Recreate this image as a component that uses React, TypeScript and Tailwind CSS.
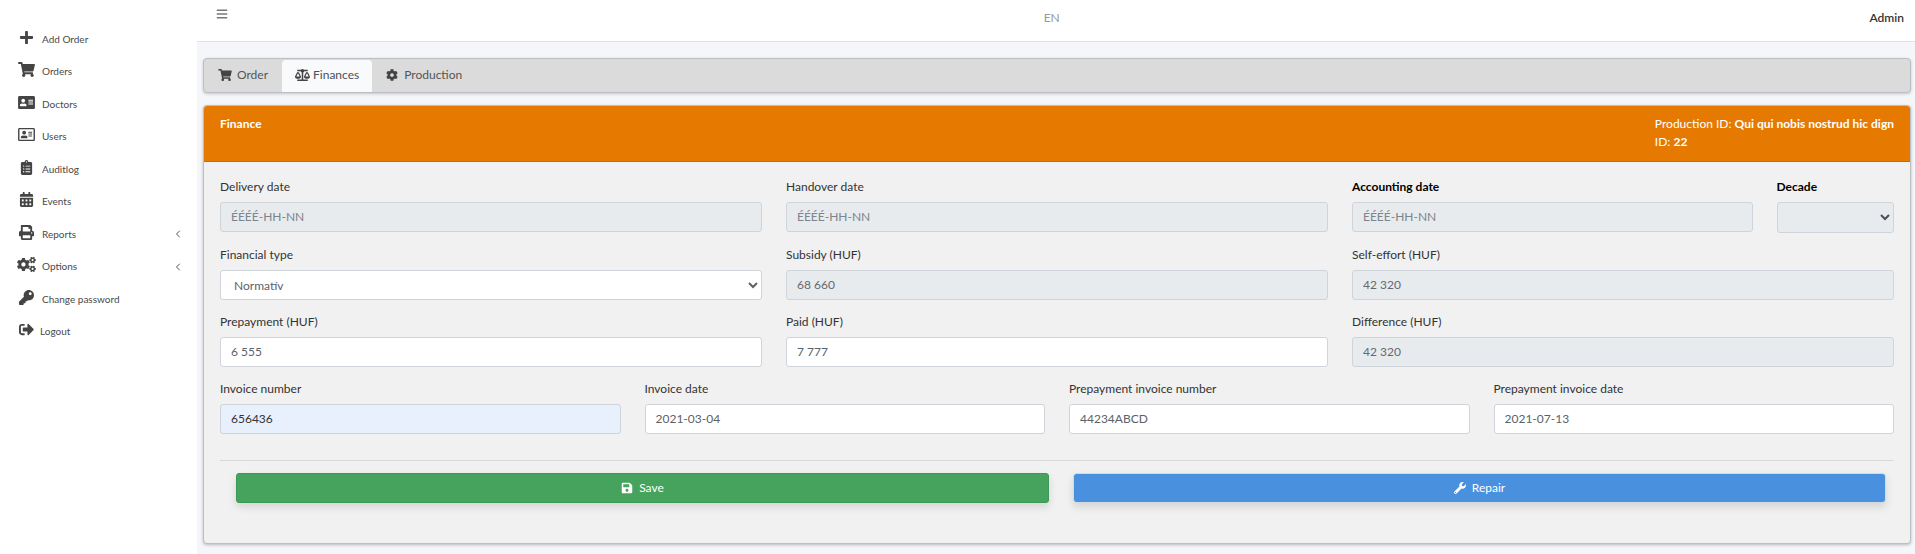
import React from "react";
import type { IconType } from "react-icons";
import { ChevronLeft } from "lucide-react";
import {
  FaAddressCard,
  FaBalanceScale,
  FaBars,
  FaCalendarAlt,
  FaClipboardList,
  FaCog,
  FaCogs,
  FaKey,
  FaPlus,
  FaPrint,
  FaRegAddressCard,
  FaSave,
  FaShoppingCart,
  FaSignOutAlt,
  FaWrench,
} from "react-icons/fa";

type NavItem = { label: string; icon: IconType; expandable?: boolean; tight?: boolean };

const navItems: NavItem[] = [
  { label: "Add Order", icon: FaPlus },
  { label: "Orders", icon: FaShoppingCart },
  { label: "Doctors", icon: FaAddressCard },
  { label: "Users", icon: FaRegAddressCard },
  { label: "Auditlog", icon: FaClipboardList },
  { label: "Events", icon: FaCalendarAlt },
  { label: "Reports", icon: FaPrint, expandable: true },
  { label: "Options", icon: FaCogs, expandable: true },
  { label: "Change password", icon: FaKey },
  { label: "Logout", icon: FaSignOutAlt, tight: true },
];

function Sidebar() {
  return (
    <nav className="w-[197px] shrink-0 bg-white pt-[21px]">
      <ul className="grid h-[325px] auto-rows-fr">
        {navItems.map(({ label, icon: Icon, expandable, tight }) => (
          <li key={label}>
            <a
              href="#"
              className={`flex h-full items-center pr-[13px] pl-4 text-[10px] text-[#4a4a4a] ${tight ? "gap-[3px]" : "gap-[5px]"}`}
            >
              <span className="flex w-[21px] justify-center">
                <Icon className="h-[15px] w-[19px] shrink-0 text-[#444]" />
              </span>
              <span className="pt-1">{label}</span>
              {expandable && <ChevronLeft className="mt-1 ml-auto size-3 text-[#555]" />}
            </a>
          </li>
        ))}
      </ul>
    </nav>
  );
}

type FieldProps = {
  id: string;
  label: string;
  value?: string;
  placeholder?: string;
  disabled?: boolean;
  bold?: boolean;
  filled?: boolean;
  className?: string;
};

function FieldLabel({ id, bold, children }: { id: string; bold?: boolean; children: React.ReactNode }) {
  return (
    <label htmlFor={id} className={`mb-[5px] block leading-5 ${bold ? "font-bold text-black" : "text-[#333]"}`}>
      {children}
    </label>
  );
}

function Field({ id, label, value, placeholder, disabled, bold, filled, className = "" }: FieldProps) {
  const tone = disabled
    ? "bg-[#e8ebee] text-[#64696e]"
    : filled
      ? "bg-[#e8f0fe] text-[#333]"
      : "bg-white text-[#5c6268]";
  return (
    <div className={className}>
      <FieldLabel id={id} bold={bold}>
        {label}
      </FieldLabel>
      <input
        id={id}
        type="text"
        defaultValue={value}
        placeholder={placeholder}
        disabled={disabled}
        className={`block h-[30px] w-full rounded-[3px] border border-[#ced4da] px-[10px] pb-[2px] placeholder:text-[#7c848b] ${tone}`}
      />
    </div>
  );
}

export default function App() {
  return (
    <div className="flex min-h-screen bg-white font-['Lato','Noto_Sans',sans-serif] text-[12px] text-[#333]">
      <Sidebar />
      <div className="flex min-w-0 flex-1 flex-col bg-[#f4f6fa]">
        <header className="flex h-[42px] items-start justify-between border-b border-[#dee2e6] bg-white pr-[11px] pl-[19px]">
          <button type="button" aria-label="Toggle menu" className="mt-2 w-[18px] text-[#777]">
            <FaBars className="size-[12px]" />
          </button>
          <a href="#" className="mt-[9px] leading-[18px] text-[#999]">
            EN
          </a>
          <a href="#" className="mt-[9px] leading-[18px] font-semibold text-[#333]">
            Admin
          </a>
        </header>

        <main className="pt-4 pr-1 pl-[6px]">
          <div
            role="tablist"
            className="flex h-[35px] rounded-[4px] border border-[#bcbfc2] bg-[#dbdbdb] pt-px shadow-[0_1px_3px_rgba(0,0,0,0.2)]"
          >
            <button type="button" role="tab" className="flex items-center gap-[5px] px-[14px] pb-[2px] text-[#555]">
              <FaShoppingCart className="h-3 w-[14px] text-[#444]" />
              Order
            </button>
            <button
              type="button"
              role="tab"
              aria-selected="true"
              className="flex items-center gap-[3px] rounded-t-[4px] bg-[#f8fafc] px-[13px] pb-[2px] text-[#495057]"
            >
              <FaBalanceScale className="h-3 w-[15px] text-[#444]" />
              Finances
            </button>
            <button type="button" role="tab" className="flex items-center gap-[6px] px-[14px] pb-[2px] text-[#555]">
              <FaCog className="size-3 text-[#444]" />
              Production
            </button>
          </div>

          <section className="mt-3 rounded-[4px] border border-[#bcbfc2] bg-[#f1f1f1] shadow-[0_1px_3px_rgba(0,0,0,0.25)]">
            <div className="flex h-14 justify-between rounded-t-[3px] border-b border-[#c96c02] bg-[#e67a00] px-4 pt-[9px] leading-[18px] text-white">
              <h1 className="font-bold">Finance</h1>
              <div>
                <p>
                  Production ID: <b>Qui qui nobis nostrud hic dign</b>
                </p>
                <p>
                  ID: <b>22</b>
                </p>
              </div>
            </div>

            <form className="px-4 pt-[15px] pb-10">
              <div className="grid grid-cols-12 gap-x-6 gap-y-3">
                <Field id="delivery" label="Delivery date" placeholder="ÉÉÉÉ-HH-NN" disabled className="col-span-4" />
                <Field id="handover" label="Handover date" placeholder="ÉÉÉÉ-HH-NN" disabled className="col-span-4" />
                <div className="col-span-4 grid grid-cols-4 gap-6">
                  <Field
                    id="accounting"
                    label="Accounting date"
                    placeholder="ÉÉÉÉ-HH-NN"
                    disabled
                    bold
                    className="col-span-3"
                  />
                  <div>
                    <FieldLabel id="decade" bold>
                      Decade
                    </FieldLabel>
                    <select
                      id="decade"
                      disabled
                      className="block h-[31px] w-full rounded-[3px] border border-[#ced4da] bg-[#e8ebee] text-[#495057] opacity-100"
                    >
                      <option></option>
                    </select>
                  </div>
                </div>

                <div className="col-span-4">
                  <FieldLabel id="type">Financial type</FieldLabel>
                  <select
                    id="type"
                    className="block h-[30px] w-full rounded-[3px] border border-[#ced4da] bg-white pl-[9px] text-[#5c6268]"
                  >
                    <option>Normatív</option>
                  </select>
                </div>
                <Field id="subsidy" label="Subsidy (HUF)" value="68 660" disabled className="col-span-4" />
                <Field id="self" label="Self-effort (HUF)" value="42 320" disabled className="col-span-4" />

                <Field id="prepayment" label="Prepayment (HUF)" value="6 555" className="col-span-4" />
                <Field id="paid" label="Paid (HUF)" value="7 777" className="col-span-4" />
                <Field id="difference" label="Difference (HUF)" value="42 320" disabled className="col-span-4" />

                <Field id="invoice" label="Invoice number" value="656436" filled className="col-span-3" />
                <Field id="invoice-date" label="Invoice date" value="2021-03-04" className="col-span-3" />
                <Field id="pre-invoice" label="Prepayment invoice number" value="44234ABCD" className="col-span-3" />
                <Field id="pre-date" label="Prepayment invoice date" value="2021-07-13" className="col-span-3" />
              </div>

              <hr className="mt-[26px] mb-3 border-[#d9d9d9]" />

              <div className="grid grid-cols-2 gap-6 pr-2 pl-4">
                <button
                  type="button"
                  className="flex h-[30px] items-center justify-center gap-[6px] rounded-[3px] border border-[#3c9a56] bg-[#45a35e] text-white shadow-[0_4px_8px_rgba(0,0,0,0.12)]"
                >
                  <FaSave className="size-3" />
                  Save
                </button>
                <button
                  type="button"
                  className="flex h-[30px] items-center justify-center gap-[6px] rounded-[3px] border border-[#d5dade] bg-[#4990df] bg-clip-padding text-white shadow-[0_4px_8px_rgba(0,0,0,0.12)]"
                >
                  <FaWrench className="size-3" />
                  Repair
                </button>
              </div>
            </form>
          </section>
        </main>
      </div>
    </div>
  );
}
